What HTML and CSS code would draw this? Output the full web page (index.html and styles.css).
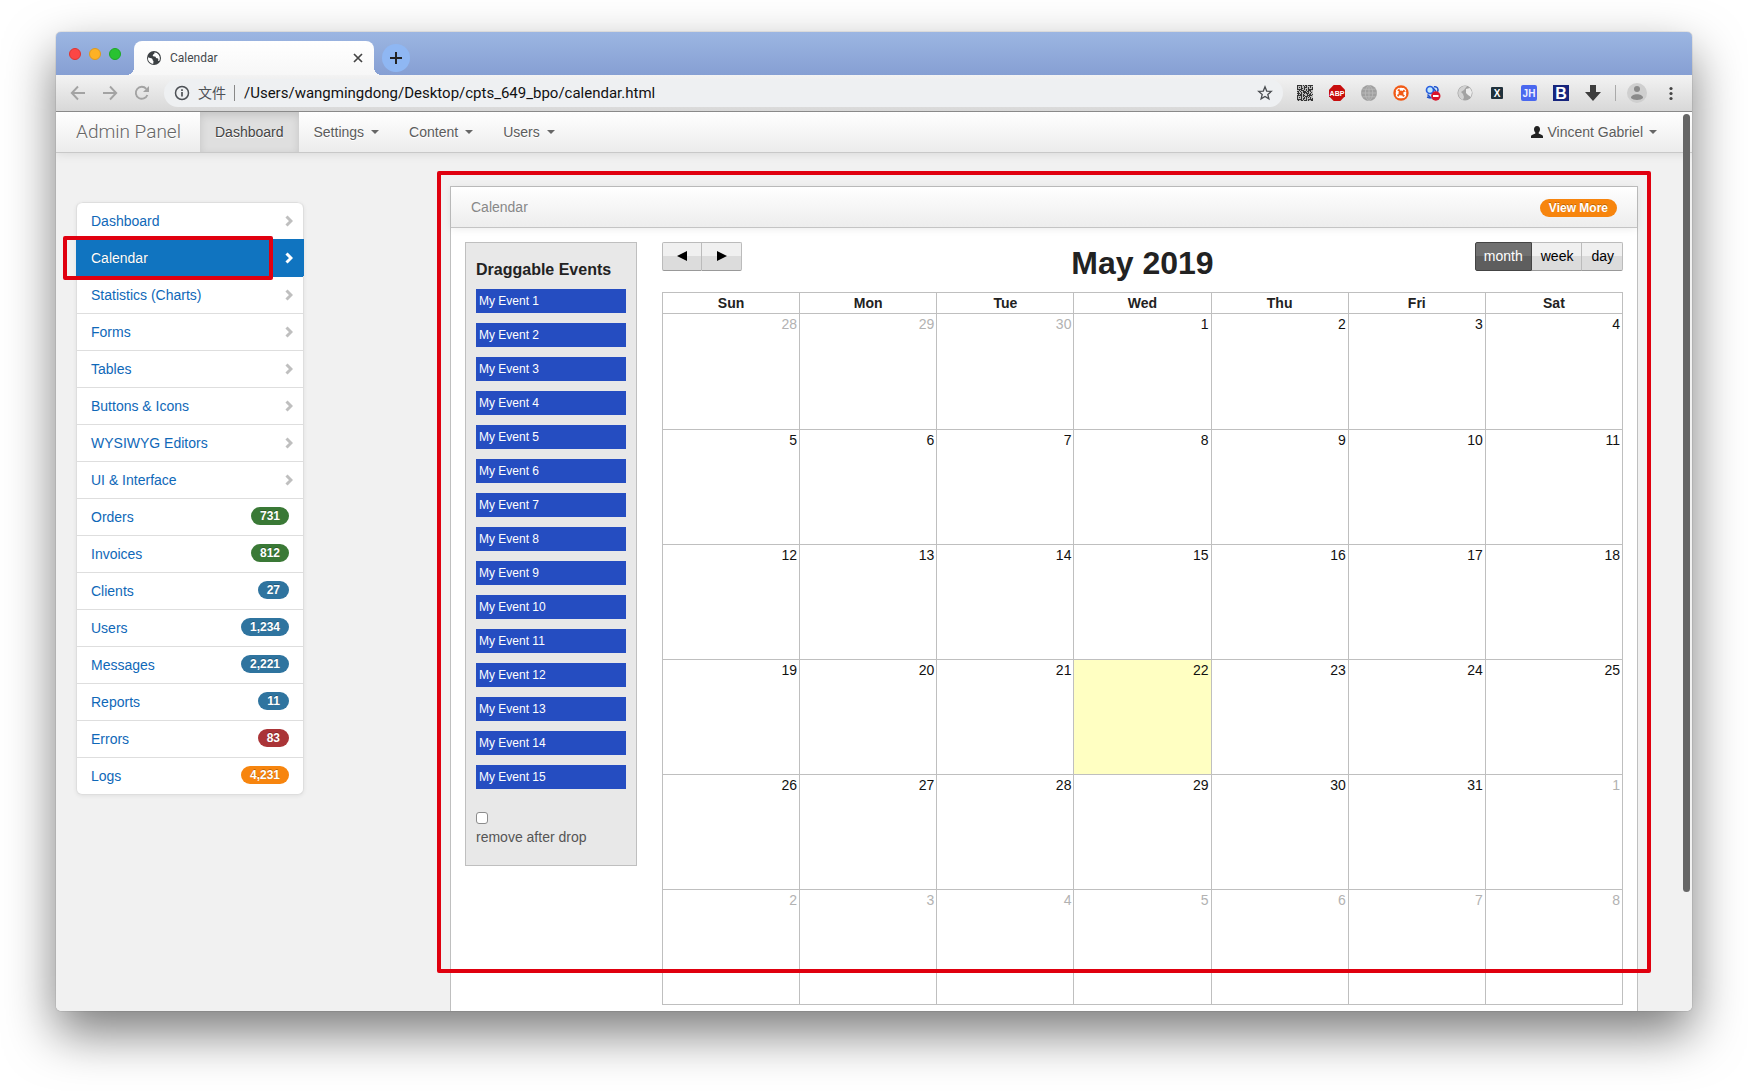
FILE: index.html
```html
<!DOCTYPE html>
<html lang="en">
<head>
<meta charset="utf-8">
<title>Calendar</title>
<link rel="stylesheet" href="styles.css">
</head>
<body>
<div class="window">
  <header class="tabstrip">
    <div class="lights"><span class="light red"></span><span class="light amber"></span><span class="light green"></span></div>
    <div class="tab">
      <svg width="16" height="16" viewBox="0 0 16 16"><circle cx="8" cy="8" r="7" fill="#3c4043"/><path d="M2 7.200C3.500 8.300 5 7.800 6 8.600S6.200 10.600 7.500 11L7.200 14 A6 6 0 0 1 2 7.200zM8.200 2.200C9.500 3.400 7.200 4 6.800 5.200S8 6.300 9 6.600 9.800 8.500 11 8.200 12.800 9.200 12 10.800L13.200 11 A6 6 0 0 0 10.800 3z" fill="#fff"/></svg>
      <span class="tab-title">Calendar</span>
      <button class="tab-close" aria-label="Close tab"><svg width="10" height="10" viewBox="0 0 10 10"><path d="M1 1l8 8M9 1l-8 8" stroke="#444" stroke-width="1.700"/></svg></button>
    </div>
    <button class="new-tab" aria-label="New tab"><svg width="12" height="12" viewBox="0 0 12 12"><path d="M6 0v12M0 6h12" stroke="#222" stroke-width="2"/></svg></button>
  </header>

  <div class="toolbar">
    <div class="history">
      <button aria-label="Back"><svg width="16" height="16" viewBox="0 0 16 16"><path d="M15 8H2M8 1.500L1.800 8 8 14.500" fill="none" stroke="#a3a3a3" stroke-width="1.900"/></svg></button>
      <button aria-label="Forward"><svg width="16" height="16" viewBox="0 0 16 16"><path d="M1 8h13M8 1.500L14.200 8 8 14.500" fill="none" stroke="#a3a3a3" stroke-width="1.900"/></svg></button>
      <button aria-label="Reload"><svg width="16" height="16" viewBox="0 0 16 16"><path d="M13.400 10A6 6 0 1 1 12.300 3.800" fill="none" stroke="#a3a3a3" stroke-width="1.900"/><path d="M15 1v6H9z" fill="#a3a3a3"/></svg></button>
    </div>
    <div class="omnibox">
      <svg width="16" height="16" viewBox="0 0 16 16"><circle cx="8" cy="8" r="6.500" fill="none" stroke="#4d5156" stroke-width="1.500"/><path d="M8 7v4.500M8 4.300v1.600" stroke="#4d5156" stroke-width="1.700"/></svg>
      <span class="scheme">文件</span>
      <input class="url" type="text" aria-label="Address" value="/Users/wangmingdong/Desktop/cpts_649_bpo/calendar.html">
      <button aria-label="Bookmark"><svg width="16" height="16" viewBox="0 0 16 16"><path d="M8 1.800l1.700 4.300 4.600.3-3.500 3 1.100 4.500L8 11.400l-3.900 2.500 1.100-4.500-3.500-3 4.600-.3z" fill="none" stroke="#4a4d51" stroke-width="1.300"/></svg></button>
    </div>
    <div class="extensions">
      <svg width="16" height="16" viewBox="0 0 16 16"><path fill="#bbb" d="M0 0h16v16H0z"/><g stroke="#333" stroke-width="1"><path d="M0 .5h16" stroke-dasharray="5 1 1 1 2 1"/><path d="M0 1.500h16" stroke-dasharray="1 3 1 2 1 1"/><path d="M0 2.500h16" stroke-dasharray="1 1 1 1 1 2 3 1"/><path d="M0 3.500h16" stroke-dasharray="1 3 2 1 1 3"/><path d="M0 4.500h16" stroke-dasharray="5 2 1 1 1 1"/><path d="M2 5.500h14" stroke-dasharray="1 1 3 2"/><path d="M0 6.500h16" stroke-dasharray="2 1 1 2 3 1"/><path d="M1 7.500h15" stroke-dasharray="1 2 1 1 4 1"/><path d="M0 8.500h16" stroke-dasharray="3 1 1 2 1 1"/><path d="M1 9.500h15" stroke-dasharray="1 1 2 1 1 3"/><path d="M0 10.500h16" stroke-dasharray="5 1 2 2"/><path d="M0 11.500h16" stroke-dasharray="1 3 1 1 1 1 3 1"/><path d="M0 12.500h16" stroke-dasharray="1 1 1 1 1 2 1 1"/><path d="M0 13.500h16" stroke-dasharray="1 3 1 1 2 1"/><path d="M0 14.500h16" stroke-dasharray="5 1 1 2 1 1"/><path d="M1 15.500h15" stroke-dasharray="1 2 2 1 3 1"/></g></svg>
      <svg width="16" height="16" viewBox="0 0 16 16"><path d="M4.700 0h6.600L16 4.700v6.600L11.300 16H4.700L0 11.300V4.700z" fill="#c70d0d"/><text class="glyph" x="8" y="11" font-size="7" fill="#fff" text-anchor="middle">ABP</text></svg>
      <svg width="16" height="16" viewBox="0 0 16 16"><circle cx="8" cy="8" r="8" fill="#a0a0a0"/><path d="M8 0v16M0 8h16M1.500 4.200h13M1.500 11.800h13M8 0C3 4 3 12 8 16M8 0c5 4 5 12 0 16" fill="none" stroke="#bcbcbc" stroke-width=".8"/></svg>
      <svg width="16" height="16" viewBox="0 0 16 16"><circle cx="8" cy="8" r="7.700" fill="#f15a16"/><circle cx="8" cy="8" r="3.900" fill="none" stroke="#fff" stroke-width="2.800" stroke-dasharray="4.100 2.030" stroke-dashoffset="2"/><path d="M3.200 6A5 5 0 0 1 6 3.200M10 3.200A5 5 0 0 1 12.800 6M12.800 10A5 5 0 0 1 10 12.800M6 12.800A5 5 0 0 1 3.200 10" fill="none" stroke="#fff" stroke-width="1.200"/></svg>
      <svg width="16" height="16" viewBox="0 0 16 16"><path d="M3 1h9l1 6-4 6-5-1z" fill="#cfe8fa"/><circle cx="5" cy="5" r="3.500" fill="#bfe8fc" stroke="#2a5fe0" stroke-width="1.700"/><path d="M9 1.800c3-.8 5 2 3.500 5M8 3l3 3.500M2.500 9.500l4 4M2 12l3 1" fill="none" stroke="#2252c8" stroke-width="1.500"/><circle cx="10.800" cy="11" r="4.700" fill="#d9142b"/><path d="M8 11h5.600" stroke="#fff" stroke-width="1.800"/></svg>
      <svg width="16" height="16" viewBox="0 0 16 16"><circle cx="8" cy="8" r="7.500" fill="#a2a2a2"/><path d="M2 4.500C4 1 8 0 10 1L7 5 4 7l2 2 1 3-1 3C2 13 0 9 2 4.500z" fill="#d2d2d2"/><path d="M9 4l4-1 2 4-1 5-3-2-2-2z" fill="#ececec"/></svg>
      <svg width="16" height="16" viewBox="0 0 16 16"><rect x="2" y="2" width="12" height="12" rx="1" fill="#20313b"/><text class="glyph" x="8" y="11.500" font-size="10" fill="#fff" text-anchor="middle">X</text></svg>
      <svg width="16" height="16" viewBox="0 0 16 16"><rect width="16" height="16" rx="2" fill="#4a68ef"/><text class="glyph" x="8" y="12" font-size="10" fill="#eef" text-anchor="middle">JH</text></svg>
      <svg width="16" height="16" viewBox="0 0 16 16"><path d="M0 0h16v16H0z" fill="#17257d"/><text class="glyph" x="8" y="13.500" font-size="16" fill="#fff" text-anchor="middle">B</text></svg>
      <svg width="16" height="16" viewBox="0 0 16 16"><path d="M5 0h6v7h5l-8 9-8-9h5z" fill="#3d3d3d"/></svg>
    </div>
    <button class="profile" aria-label="Profile"><svg width="20" height="20" viewBox="0 0 20 20"><circle cx="10" cy="10" r="10" fill="#cfcfcf"/><circle cx="10" cy="6" r="3" fill="#8a8a8a"/><path d="M4 15c0-5 12-5 12 0-2 2.500-10 2.500-12 0z" fill="#8a8a8a"/></svg></button>
    <button aria-label="Menu"><svg width="16" height="16" viewBox="0 0 16 16"><g fill="#444"><circle cx="8" cy="3.500" r="1.600"/><circle cx="8" cy="8.500" r="1.600"/><circle cx="8" cy="13.500" r="1.600"/></g></svg></button>
  </div>

  <div class="viewport">
    <nav class="navbar">
      <a class="brand" href="#">Admin Panel</a>
      <a class="nav-link active" href="#">Dashboard</a>
      <a class="nav-link" href="#">Settings<i class="caret"></i></a>
      <a class="nav-link" href="#">Content<i class="caret"></i></a>
      <a class="nav-link" href="#">Users<i class="caret"></i></a>
      <a class="nav-link user" href="#"><svg width="12" height="12" viewBox="0 0 12 12"><path d="M6 0C8 0 9 1.400 9 3.200c0 1.500-.6 2.500-1.300 3.200v1.200c.5.900 4.300 1 4.300 3V12H0v-1.400c0-2 3.800-2.100 4.300-3V6.400C3.600 5.700 3 4.700 3 3.200 3 1.400 4 0 6 0z" fill="#222"/></svg>Vincent Gabriel<i class="caret"></i></a>
    </nav>

    <div class="layout">
      <ul class="sidebar">
        <li><a href="#">Dashboard<svg class="chev" viewBox="0 0 8 12"><path d="M1.500 1.500L6 6l-4.500 4.500"/></svg></a></li>
        <li class="current"><a href="#">Calendar<svg class="chev" viewBox="0 0 8 12"><path d="M1.500 1.500L6 6l-4.500 4.500"/></svg></a><span class="mark mark-item"></span></li>
        <li><a href="#">Statistics (Charts)<svg class="chev" viewBox="0 0 8 12"><path d="M1.500 1.500L6 6l-4.500 4.500"/></svg></a></li>
        <li><a href="#">Forms<svg class="chev" viewBox="0 0 8 12"><path d="M1.500 1.500L6 6l-4.500 4.500"/></svg></a></li>
        <li><a href="#">Tables<svg class="chev" viewBox="0 0 8 12"><path d="M1.500 1.500L6 6l-4.500 4.500"/></svg></a></li>
        <li><a href="#">Buttons &amp; Icons<svg class="chev" viewBox="0 0 8 12"><path d="M1.500 1.500L6 6l-4.500 4.500"/></svg></a></li>
        <li><a href="#">WYSIWYG Editors<svg class="chev" viewBox="0 0 8 12"><path d="M1.500 1.500L6 6l-4.500 4.500"/></svg></a></li>
        <li><a href="#">UI &amp; Interface<svg class="chev" viewBox="0 0 8 12"><path d="M1.500 1.500L6 6l-4.500 4.500"/></svg></a></li>
        <li><a href="#">Orders<span class="badge success">731</span></a></li>
        <li><a href="#">Invoices<span class="badge success">812</span></a></li>
        <li><a href="#">Clients<span class="badge info">27</span></a></li>
        <li><a href="#">Users<span class="badge info">1,234</span></a></li>
        <li><a href="#">Messages<span class="badge info">2,221</span></a></li>
        <li><a href="#">Reports<span class="badge info">11</span></a></li>
        <li><a href="#">Errors<span class="badge danger">83</span></a></li>
        <li><a href="#">Logs<span class="badge warning">4,231</span></a></li>
      </ul>

      <main class="block">
        <div class="block-head"><span>Calendar</span><a class="badge warning" href="#">View More</a></div>
        <div class="block-body">
          <section class="events">
            <h4>Draggable Events</h4>
            <div class="event">My Event 1</div>
            <div class="event">My Event 2</div>
            <div class="event">My Event 3</div>
            <div class="event">My Event 4</div>
            <div class="event">My Event 5</div>
            <div class="event">My Event 6</div>
            <div class="event">My Event 7</div>
            <div class="event">My Event 8</div>
            <div class="event">My Event 9</div>
            <div class="event">My Event 10</div>
            <div class="event">My Event 11</div>
            <div class="event">My Event 12</div>
            <div class="event">My Event 13</div>
            <div class="event">My Event 14</div>
            <div class="event">My Event 15</div>
            <input type="checkbox" id="drop-remove">
            <label for="drop-remove">remove after drop</label>
          </section>

          <section class="calendar">
            <div class="cal-head">
              <div class="group"><button class="arrow" aria-label="Previous"><svg width="10" height="10" viewBox="0 0 10 10"><path d="M10 0v10L0 5z"/></svg></button><button class="arrow" aria-label="Next"><svg width="10" height="10" viewBox="0 0 10 10"><path d="M0 0v10l10-5z"/></svg></button></div>
              <h2>May 2019</h2>
              <div class="group views"><button class="on">month</button><button>week</button><button>day</button></div>
            </div>
            <table>
              <thead><tr><th>Sun</th><th>Mon</th><th>Tue</th><th>Wed</th><th>Thu</th><th>Fri</th><th>Sat</th></tr></thead>
              <tbody>
                <tr><td class="other">28</td><td class="other">29</td><td class="other">30</td><td>1</td><td>2</td><td>3</td><td>4</td></tr>
                <tr><td>5</td><td>6</td><td>7</td><td>8</td><td>9</td><td>10</td><td>11</td></tr>
                <tr><td>12</td><td>13</td><td>14</td><td>15</td><td>16</td><td>17</td><td>18</td></tr>
                <tr><td>19</td><td>20</td><td>21</td><td class="today">22</td><td>23</td><td>24</td><td>25</td></tr>
                <tr><td>26</td><td>27</td><td>28</td><td>29</td><td>30</td><td>31</td><td class="other">1</td></tr>
                <tr><td class="other">2</td><td class="other">3</td><td class="other">4</td><td class="other">5</td><td class="other">6</td><td class="other">7</td><td class="other">8</td></tr>
              </tbody>
            </table>
          </section>
        </div>
      </main>
    </div>
    <span class="scroll-thumb"></span>
    <span class="mark mark-main"></span>
  </div>
</div>
</body>
</html>
```

FILE: styles.css
```css
* { box-sizing: border-box; }

body {
  margin: 0;
  height: 100vh;
  padding: 32px 56px 80px;
  background: #fff;
  color: #333;
  font: 14px/20px "Liberation Sans", Arial, sans-serif;
  overflow: hidden;
}

a { color: #0f68b8; text-decoration: none; }
button { border: 0; padding: 0; background: none; font: inherit; color: inherit; }
svg { display: block; flex: none; }
.glyph { font-family: "Liberation Sans", sans-serif; font-weight: bold; }

/* Browser window */
.window {
  display: flex;
  flex-direction: column;
  height: 100%;
  border-radius: 5px;
  overflow: hidden;
  box-shadow: 0 0 1px rgba(0, 0, 0, .6), 0 22px 50px rgba(0, 0, 0, .52);
}

.tabstrip {
  display: flex;
  align-items: flex-end;
  height: 43px;
  background: linear-gradient(#9cb6e2, #869fd3);
  font-family: Roboto, sans-serif;
}
.lights { display: flex; gap: 8px; margin: 0 13px 15px 13px; }
.light { width: 12px; height: 12px; border-radius: 50%; border: 1px solid; }
.red { background: #fc4645; border-color: #e0342f; }
.amber { background: #fdb124; border-color: #df9a1b; }
.green { background: #29c231; border-color: #1da824; }

.tab {
  position: relative;
  display: flex;
  align-items: center;
  width: 240px;
  height: 34px;
  padding: 0 11px 0 12px;
  border-radius: 8px 8px 0 0;
  background: #fff linear-gradient(#fff, #f7f7f7);
  font-size: 12px;
  color: #45494d;
}
.tab::before, .tab::after {
  content: "";
  position: absolute;
  bottom: 0;
  width: 8px;
  height: 8px;
}
.tab::before { right: 100%; background: radial-gradient(circle at 0 0, transparent 8px, #f7f7f7 8px); }
.tab::after { left: 100%; background: radial-gradient(circle at 100% 0, transparent 8px, #f7f7f7 8px); }
.tab-title { flex: 1; margin-left: 8px; }
.new-tab {
  display: grid;
  place-items: center;
  width: 28px;
  height: 28px;
  margin: 0 0 3px 8px;
  border-radius: 50%;
  background: #8fb7f3;
}

.toolbar {
  display: flex;
  align-items: center;
  height: 37px;
  padding: 0 13px 0 14px;
  background: linear-gradient(#f3f3f3, #d8d8d8);
  border-bottom: 1px solid #8a8a8a;
  font-family: Roboto, "Noto Sans CJK SC", sans-serif;
}
.history { display: flex; gap: 16px; }
.omnibox {
  flex: 1;
  display: flex;
  align-items: center;
  height: 28px;
  margin: 0 14px;
  padding: 0 10px;
  border-radius: 14px;
  background: #eef0f2;
}
.scheme { margin-left: 8px; padding-right: 8px; line-height: 16px; border-right: 1px solid #888; color: #4d5156; }
.url {
  flex: 1;
  min-width: 0;
  border: 0;
  padding: 0 0 0 9px;
  background: none;
  font: 15px/20px Roboto, sans-serif;
  color: #111;
}
.extensions {
  display: flex;
  gap: 16px;
  padding-right: 14px;
}
.profile { margin-right: 16px; padding-left: 12px; position: relative; }
.profile::before { content: ""; position: absolute; left: 0; top: 2px; width: 1px; height: 16px; background: #aaa; }

/* Page */
.viewport { position: relative; flex: 1; min-height: 0; overflow: hidden; background: #f1f1f1; }

.navbar {
  display: flex;
  height: 41px;
  padding: 0 20px;
  background: linear-gradient(#fff, #ececec);
  border-bottom: 1px solid #c8c8c8;
  box-shadow: 0 1px 10px rgba(0, 0, 0, .1);
  line-height: 40px;
  text-shadow: 0 1px 0 #fff;
}
.brand { width: 124px; font-family: Roboto, sans-serif; font-size: 19px; font-weight: 300; color: #666; }
.nav-link { display: flex; align-items: center; padding: 0 15px; color: #5c5c5c; }
.nav-link.active { background: #dfdfdf; box-shadow: inset 0 3px 8px rgba(0, 0, 0, .125); color: #444; }
.user { margin-left: auto; }
.user svg { margin-right: 5px; }
.caret { margin-left: 7px; border: 4px solid transparent; border-top-color: #666; border-bottom: 0; }
.user .caret { margin-left: 6px; }

.layout {
  display: grid;
  grid-template-columns: 228px minmax(0, 1fr);
  gap: 146px;
  align-items: start;
  padding: 33px 54px 20px 20px;
}

.sidebar {
  margin: 16px 0 0;
  padding: 0;
  list-style: none;
  background: #fff;
  border: 1px solid #dedede;
  border-top: 0;
  border-radius: 6px;
  box-shadow: 0 1px 4px rgba(0, 0, 0, .07);
}
.sidebar li { position: relative; border-top: 1px solid #dedede; }
.sidebar li:first-child { border-radius: 6px 6px 0 0; }
.sidebar a { display: flex; align-items: center; justify-content: space-between; height: 36px; padding: 0 14px; }
.sidebar .badge { margin-bottom: 2px; }
.chev { width: 8px; height: 12px; margin-right: -4px; margin-bottom: 1px; fill: none; stroke: #bfbfbf; stroke-width: 3; }
.sidebar .current { margin: 0 -1px; padding: 0 1px; background: #1074c0; border-color: #1074c0; }
.sidebar .current + li { border-top-color: #1074c0; }
.current a { color: #fff; text-shadow: 0 0 1px rgba(0, 0, 0, .3); }
.current .chev { stroke: #fff; }
.sidebar .current .mark { z-index: 1; }

.badge {
  padding: 0 9px;
  border-radius: 9px;
  font-size: 12px;
  line-height: 18px;
  font-weight: bold;
  color: #fff;
  text-shadow: 0 -1px 0 rgba(0, 0, 0, .25);
}
.success { background: #3a7936; }
.info { background: #2f749f; }
.danger { background: #aa3437; }
.warning { background: #f7850e; }

.block { background: #fff; border: 1px solid #bfbfbf; }
.block-head {
  display: flex;
  align-items: center;
  justify-content: space-between;
  height: 41px;
  padding: 0 20px;
  background: linear-gradient(#fff, #ededed);
  border-bottom: 1px solid #c4c4c4;
  box-shadow: 0 1px 8px rgba(0, 0, 0, .08);
  color: #888;
}
.block-head .badge { margin-top: 2px; }
.block-body {
  display: grid;
  grid-template-columns: 172px minmax(0, 1fr);
  gap: 25px;
  align-items: start;
  padding: 14px;
}

.events { padding: 17px 10px 18px; background: #e8e8e8; border: 1px solid #bfbfbf; color: #555; }
.events h4 { margin: 0 0 9px; font-size: 16px; color: #222; }
.event { margin-bottom: 10px; padding: 0 3px; background: #254dc1; font-size: 12px; line-height: 24px; color: #fff; }
.events input {
  appearance: none;
  display: block;
  width: 12px;
  height: 12px;
  margin: 23px 0 3px;
  border: 1px solid #8c8c8c;
  border-radius: 3px;
  background: #fff;
}
.events label { display: block; }

.cal-head { display: grid; grid-template-columns: 1fr auto 1fr; align-items: start; margin-bottom: 8px; }
.cal-head h2 { margin: 0; font-size: 32px; line-height: 42px; color: #222; }
.group { display: flex; }
.views { justify-content: flex-end; }
.group button {
  height: 29px;
  padding: 0 8px 1px;
  border: 1px solid #bbb;
  border-bottom-color: #999;
  border-left-width: 0;
  background: linear-gradient(#f0f0f0 50%, #dcdcdc 50%);
  color: #000;
}
.group button:first-child { border-left-width: 1px; border-radius: 2px 0 0 2px; }
.group button:last-child { border-radius: 0 2px 2px 0; }
.group button + button:not(.arrow) { padding-left: 9px; }
.group .arrow { display: grid; place-items: center; width: 40px; }
.group .on {
  background: linear-gradient(#707070 50%, #5e5e5e 50%);
  border-color: #444;
  color: #fff;
}

table { width: 100%; table-layout: fixed; border-collapse: collapse; }
th, td { padding: 0 2px; border: 1px solid #bfbfbf; color: #222; }
th { height: 21px; line-height: 20px; }
td { height: 115px; vertical-align: top; text-align: right; color: #111; }
tbody tr:first-child td { height: 116px; }
.other { color: #b2b2b2; }
.today { background: #ffffc2; }

/* Overlays */
.scroll-thumb { position: absolute; top: 2px; right: 2px; bottom: 119px; width: 7px; border-radius: 4px; background: #666; }
.mark { position: absolute; border: 4px solid #e0000f; border-radius: 2px; pointer-events: none; }
.mark-item { top: -4px; left: -13px; right: 31px; height: 44px; }
.mark-main { top: 59px; right: 41px; bottom: 38px; left: 381px; }
```
